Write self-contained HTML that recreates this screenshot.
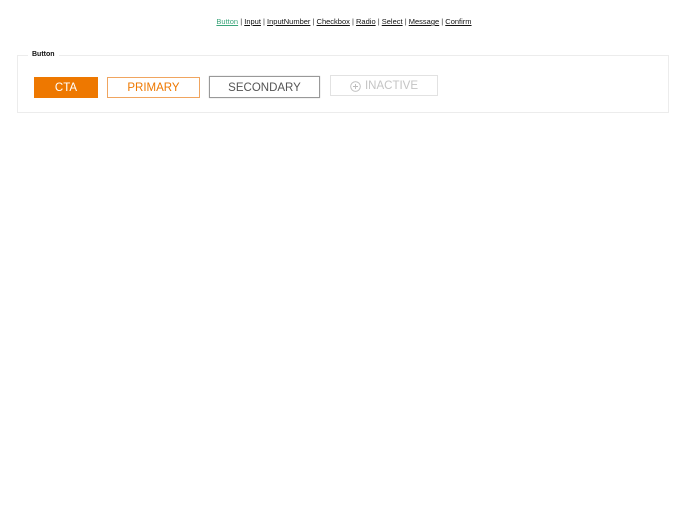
<!DOCTYPE html>
<html><head><meta charset="utf-8"><style>
html,body{margin:0;padding:0;background:#fff;width:688px;height:512px;overflow:hidden;font-family:"Liberation Sans",sans-serif}
.nav{position:absolute;top:17px;left:0;width:688px;text-align:center;font-size:7.5px;color:#333}
.nav a{color:#111;text-decoration:underline}
.nav a.act{color:#3aa57a}
.fs{position:absolute;left:17px;top:55px;width:652px;height:58px;border:1px solid #ececec;box-sizing:border-box}
.lg{position:absolute;left:28px;top:51px;background:#fff;padding:0 4px;font-size:7px;font-weight:bold;color:#111}
.b{position:absolute;box-sizing:border-box;display:flex;align-items:center;justify-content:center;font-size:11.5px;padding-top:1px}
</style></head><body>
<div class="nav"><a class="act">Button</a> | <a>Input</a> | <a>InputNumber</a> | <a>Checkbox</a> | <a>Radio</a> | <a>Select</a> | <a>Message</a> | <a>Confirm</a></div>
<div class="fs"></div>
<div class="lg">Button</div>
<div class="b" style="left:34px;top:77px;width:64px;height:21px;background:#ee7800;color:#fff">CTA</div>
<div class="b" style="left:107px;top:77px;width:93px;height:21px;border:1px solid #f0a560;color:#ee7800">PRIMARY</div>
<div class="b" style="left:209px;top:76px;width:111px;height:22px;border:1px solid #999;color:#555;box-shadow:0 0 1px #bbb">SECONDARY</div>
<div class="b" style="left:330px;top:75px;width:108px;height:21px;border:1px solid #e2e2e2;color:#c4c4c4;gap:4px"><svg width="11" height="11" viewBox="0 0 11 11"><circle cx="5.5" cy="5.5" r="4.8" fill="none" stroke="#bbb" stroke-width="0.9"/><path d="M5.5 3v5M3 5.5h5" stroke="#bbb" stroke-width="0.9"/></svg>INACTIVE</div>
</body></html>
